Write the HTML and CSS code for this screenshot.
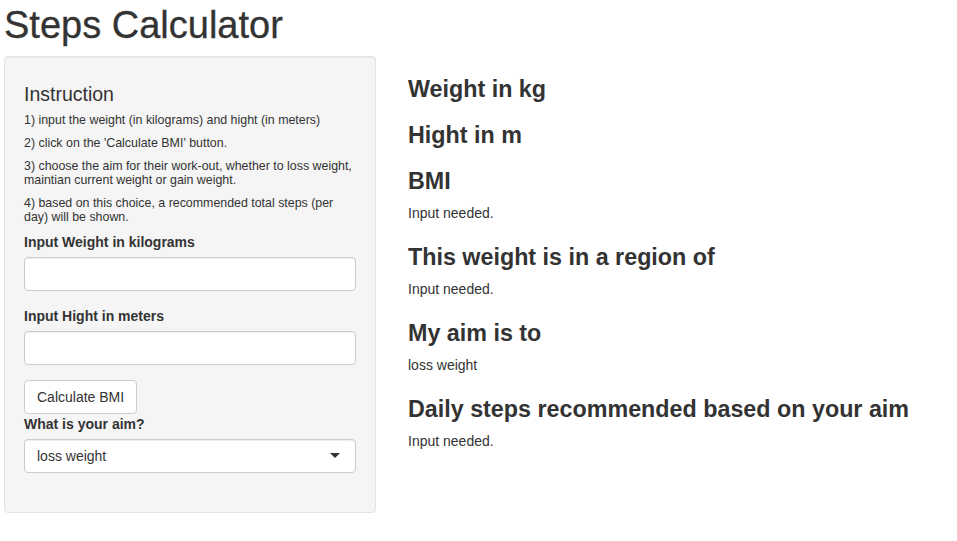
FILE: index.html
```html
<!DOCTYPE html>
<html lang="en">
<head>
<meta charset="utf-8">
<title>Steps Calculator</title>
<link rel="stylesheet" href="styles.css">
</head>
<body>
<div class="page">
  <h1 class="title">Steps Calculator</h1>
  <div class="layout">
    <aside class="well">
      <h4 class="well-title">Instruction</h4>
      <p class="note">1) input the weight (in kilograms) and hight (in meters)</p>
      <p class="note">2) click on the 'Calculate BMI' button.</p>
      <p class="note">3) choose the aim for their work-out, whether to loss weight, maintian current weight or gain weight.</p>
      <p class="note last-note">4) based on this choice, a recommended total steps (per day) will be shown.</p>
      <div class="form-group">
        <label class="label" for="w">Input Weight in kilograms</label>
        <input class="control" id="w" type="text">
      </div>
      <div class="form-group">
        <label class="label" for="h">Input Hight in meters</label>
        <input class="control" id="h" type="text">
      </div>
      <button class="btn" type="button">Calculate BMI</button>
      <div class="form-group">
        <label class="label">What is your aim?</label>
        <div class="select">
          <span>loss weight</span>
          <span class="caret"></span>
        </div>
      </div>
    </aside>
    <main class="main">
      <h3 class="heading">Weight in kg</h3>
      <div class="out"></div>
      <h3 class="heading">Hight in m</h3>
      <div class="out"></div>
      <h3 class="heading">BMI</h3>
      <div class="out">Input needed.</div>
      <h3 class="heading">This weight is in a region of</h3>
      <div class="out">Input needed.</div>
      <h3 class="heading">My aim is to</h3>
      <div class="out">loss weight</div>
      <h3 class="heading">Daily steps recommended based on your aim</h3>
      <div class="out">Input needed.</div>
    </main>
  </div>
</div>
</body>
</html>
```
FILE: styles.css
```css
* { box-sizing: border-box; }
html, body { margin: 0; padding: 0; background: #fff; }
body {
  font-family: "Liberation Sans", Arial, Helvetica, sans-serif;
  font-size: 14px;
  line-height: 20px;
  color: #333;
}
.page { padding: 0 4px; }
.title {
  font-size: 38px;
  line-height: 41px;
  font-weight: 500;
  margin: 5px 0 10px 0;
  color: #333;
  -webkit-text-stroke: 0.3px #333;
}
.layout {
  display: grid;
  grid-template-columns: 372px 1fr;
  column-gap: 32px;
  align-items: start;
}
.well {
  background: #f5f5f5;
  border: 1px solid #e3e3e3;
  border-radius: 4px;
  box-shadow: inset 0 1px 1px rgba(0,0,0,.05);
  padding: 19px;
  padding-bottom: 24px;
}
.well-title {
  font-size: 19.5px;
  line-height: 21px;
  font-weight: 500;
  margin: 8px 0 8px 0;
}
.note {
  font-size: 12.4px;
  line-height: 14px;
  margin: 0 0 9px 0;
}
.note.last-note { margin-bottom: 8px; }
.form-group { margin-bottom: 15px; }
.label {
  display: block;
  font-weight: bold;
  margin-bottom: 5px;
}
.control {
  display: block;
  width: 100%;
  height: 34px;
  padding: 6px 12px;
  font: inherit;
  color: #555;
  background: #fff;
  border: 1px solid #ccc;
  border-radius: 4px;
  box-shadow: inset 0 1px 1px rgba(0,0,0,.075);
}
.btn {
  display: block;
  height: 34px;
  padding: 6px 12px;
  font: inherit;
  color: #333;
  background: #fff;
  border: 1px solid #ccc;
  border-radius: 4px;
}
.select {
  position: relative;
  height: 34px;
  padding: 6px 12px;
  background: #fff;
  border: 1px solid #ccc;
  border-radius: 4px;
  box-shadow: inset 0 1px 1px rgba(0,0,0,.075);
  color: #333;
}
.caret {
  position: absolute;
  right: 15px;
  top: 13px;
  width: 0;
  height: 0;
  border-style: solid;
  border-width: 5px 5px 0 5px;
  border-color: #333 transparent transparent transparent;
}
.heading {
  font-size: 23.3px;
  line-height: 26px;
  font-weight: bold;
  margin: 20px 0 8px 0;
}
.out { line-height: 22px; }
```
